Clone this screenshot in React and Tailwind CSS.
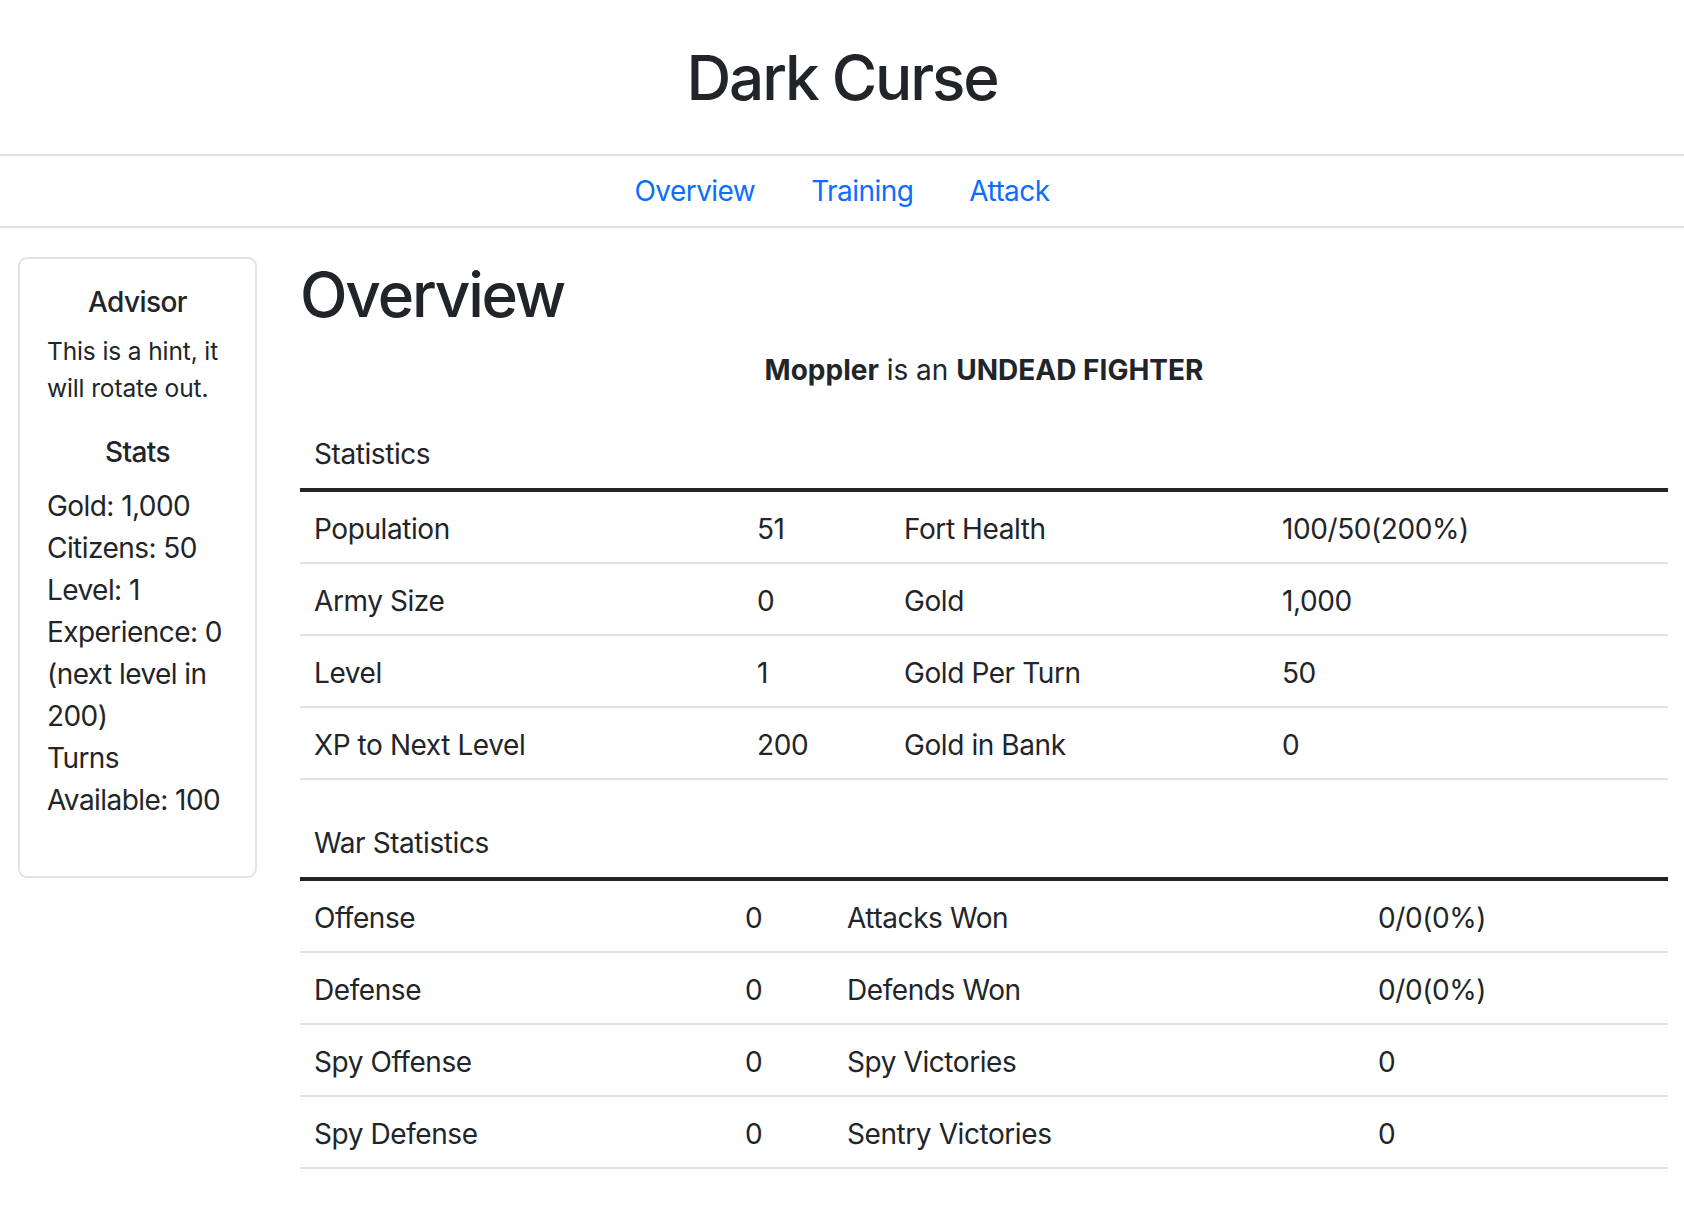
import React from 'react'

const stats = [
  ['Population', '51', 'Fort Health', '100/50(200%)'],
  ['Army Size', '0', 'Gold', '1,000'],
  ['Level', '1', 'Gold Per Turn', '50'],
  ['XP to Next Level', '200', 'Gold in Bank', '0'],
]

const warStats = [
  ['Offense', '0', 'Attacks Won', '0/0(0%)'],
  ['Defense', '0', 'Defends Won', '0/0(0%)'],
  ['Spy Offense', '0', 'Spy Victories', '0'],
  ['Spy Defense', '0', 'Sentry Victories', '0'],
]

function StatTable({ title, rows, widths, className }) {
  return (
    <table className={`w-full border-collapse table-fixed tracking-[-0.015em] ${className}`}>
      <colgroup>
        <col className={widths[0]} />
        <col className={widths[1]} />
        <col className={widths[2]} />
        <col />
      </colgroup>
      <thead>
        <tr>
          <th
            colSpan={4}
            className="text-left font-normal px-[14px] pt-[14px] pb-[13px] leading-[42px] border-b-4 border-[#212529]"
          >
            {title}
          </th>
        </tr>
      </thead>
      <tbody>
        {rows.map((row, i) => (
          <tr key={i}>
            {row.map((cell, j) => (
              <td
                key={j}
                className="px-[14px] pt-[16px] pb-[12px] leading-[42px] border-b-2 border-[#dee2e6] whitespace-nowrap"
              >
                {cell}
              </td>
            ))}
          </tr>
        ))}
      </tbody>
    </table>
  )
}

export default function App() {
  return (
    <div className="min-h-screen bg-white text-[#212529] font-['Inter','Helvetica_Neue',Arial,sans-serif] text-[28px]">
      {/* header */}
      <header className="h-[156px] flex items-center justify-center border-b-2 border-[#dee2e6]">
        <h1 className="text-[62px] leading-[77px] font-medium tracking-[-0.035em]">Dark Curse</h1>
      </header>

      {/* nav */}
      <nav className="h-[72px] flex justify-center items-center border-b-2 border-[#dee2e6] tracking-[-0.02em]">
        <a href="#" className="px-[28px] py-[14px] leading-[42px] text-[#0d6efd]">Overview</a>
        <a href="#" className="px-[28px] py-[14px] leading-[42px] text-[#0d6efd]">Training</a>
        <a href="#" className="px-[28px] py-[14px] leading-[42px] text-[#0d6efd]">Attack</a>
      </nav>

      <div className="flex items-start pr-[16px]">
        {/* sidebar */}
        <aside className="ml-[18px] mt-[29px] w-[239px] shrink-0 border-2 border-[#e2e3e5] rounded-[9px] px-[27px] pt-[26px] pb-[27px]">
          <h6 className="text-center text-[28px] leading-[34px] font-medium tracking-[-0.02em] mb-[14px]">Advisor</h6>
          <p className="text-[24.5px] leading-[37px] tracking-[-0.005em] mb-[28px]">This is a hint, it will rotate out.</p>
          <h6 className="text-center text-[28px] leading-[34px] font-medium tracking-[-0.02em] mb-[16px]">Stats</h6>
          <div className="leading-[42px] tracking-[-0.02em] mb-[28px]">
            <div>Gold: 1,000</div>
            <div>Citizens: 50</div>
            <div>Level: 1</div>
            <div>Experience: 0 (next level in 200)</div>
            <div>Turns Available: 100</div>
          </div>
        </aside>

        {/* main */}
        <main className="ml-[43px] mt-[28px] flex-1">
          <h1 className="text-[62px] leading-[77px] font-medium tracking-[-0.035em] mb-[16px]">Overview</h1>
          <p className="text-center text-[28px] leading-[42px] mb-[28px]">
            <strong className="font-bold">Moppler</strong> is an <strong className="font-bold">UNDEAD FIGHTER</strong>
          </p>
          <StatTable
            title="Statistics"
            rows={stats}
            widths={['w-[443px]', 'w-[147px]', 'w-[378px]']}
            className="mb-[28px]"
          />
          <StatTable
            title="War Statistics"
            rows={warStats}
            widths={['w-[431px]', 'w-[102px]', 'w-[531px]']}
            className="mb-[28px]"
          />
        </main>
      </div>
    </div>
  )
}
